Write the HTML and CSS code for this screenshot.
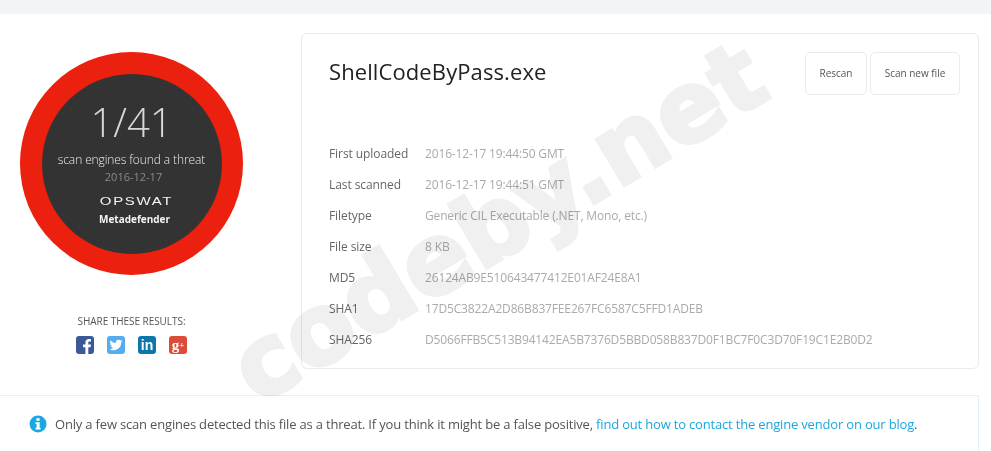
FILE: index.html
```html
<!DOCTYPE html>
<html lang="en">
<head>
    <meta charset="UTF-8">
    <meta name="viewport" content="width=device-width, initial-scale=1.0">
    <title>ShellCodeByPass.exe</title>
    <link rel="stylesheet" href="styles.css">
</head>
<body>
    <div class="topbar"></div>
    <div class="summary">
        <div class="side">
            <div class="ring">
                <div class="disc">
                    <div class="score">1/41</div>
                    <div class="found">scan engines found a threat</div>
                    <div class="date">2016-12-17</div>
                    <div class="opswat">OPSWAT</div>
                    <div class="product">Metadefender</div>
                </div>
            </div>
            <div class="share-title">SHARE THESE RESULTS:</div>
            <div class="share">
                <span class="social fb">
                    <svg viewBox="0 0 18 18" width="18" height="18"><path fill="#fff" d="M12.300 18v-6.800h2.300l.4-2.700h-2.700V6.900c0-.8.300-1.300 1.400-1.300H15V3.200c-.3 0-1.100-.1-2.100-.1-2.100 0-3.500 1.300-3.500 3.500v1.900H7v2.700h2.400V18z"/></svg>
                </span>
                <span class="social tw">
                    <svg viewBox="0 0 24 24" width="14" height="14"><path fill="#fff" d="M23 5c-.8.4-1.700.6-2.600.7.900-.6 1.600-1.400 2-2.500-.9.500-1.900.900-2.900 1.100a4.600 4.600 0 0 0-7.800 4.200C7.900 8.300 4.500 6.500 2.300 3.700a4.600 4.600 0 0 0 1.400 6.100c-.7 0-1.400-.2-2.100-.6 0 2.200 1.600 4.100 3.700 4.600-.7.200-1.400.2-2.100.1.600 1.800 2.300 3.100 4.300 3.200A9.300 9.300 0 0 1 .7 19a13 13 0 0 0 20-11.500c.9-.7 1.700-1.500 2.300-2.500z"/></svg>
                </span>
                <span class="social in">in</span>
                <span class="social gp">g<small>+</small></span>
            </div>
        </div>
        <div class="card">
            <div class="card-head">
                <h1>ShellCodeByPass.exe</h1>
                <div class="actions">
                    <a class="btn btn-rescan">Rescan</a>
                    <a class="btn btn-new">Scan new file</a>
                </div>
            </div>
            <dl class="details">
                <dt>First uploaded</dt><dd>2016-12-17 19:44:50 GMT</dd>
                <dt>Last scanned</dt><dd>2016-12-17 19:44:51 GMT</dd>
                <dt>Filetype</dt><dd>Generic CIL Executable (.NET, Mono, etc.)</dd>
                <dt>File size</dt><dd>8 KB</dd>
                <dt>MD5</dt><dd>26124AB9E510643477412E01AF24E8A1</dd>
                <dt>SHA1</dt><dd>17D5C3822A2D86B837FEE267FC6587C5FFD1ADEB</dd>
                <dt>SHA256</dt><dd>D5066FFB5C513B94142EA5B7376D5BBD058B837D0F1BC7F0C3D70F19C1E2B0D2</dd>
            </dl>
        </div>
    </div>
    <div class="notice">
        <svg class="info" viewBox="0 0 18 18" width="18" height="18"><circle cx="9" cy="9" r="8.500" fill="#1ba7e1"/><path fill="#fff" d="M7.400 3.300h3.200v2.500H7.400zM6.500 7.200h4.100v5.500h1v1.900H6.500v-1.900h1.100V9.100H6.500z"/></svg>
        <p>Only a few scan engines detected this file as a threat. If you think it might be a false positive, <a>find out how to contact the engine vendor on our blog</a>.</p>
    </div>
    <div class="watermark">codeby.net</div>
</body>
</html>
```

FILE: styles.css
```css
body {
    font-family: 'Open Sans', sans-serif;
    margin: 0;
    padding: 0;
    height: 451px;
    overflow: hidden;
    position: relative;
    background-color: #fff;
    color: #555;
}
.topbar {
    height: 14px;
    background-color: #f3f4f6;
}
.summary {
    display: flex;
    padding: 19px 12px 0 20px;
}
.side {
    width: 223px;
    margin-right: 58px;
    padding-top: 19px;
    text-align: center;
}
.ring {
    width: 223px;
    height: 223px;
    border-radius: 50%;
    background-color: #ec200e;
    display: flex;
    align-items: center;
    justify-content: center;
}
.disc {
    width: 180px;
    height: 180px;
    border-radius: 50%;
    background-color: #333;
    box-sizing: border-box;
    padding-top: 21px;
}
.score {
    font-size: 40px;
    font-weight: 300;
    line-height: 54px;
    color: #d8d8d8;
}
.found {
    font-size: 12px;
    font-weight: 300;
    line-height: 17px;
    margin-top: 2px;
    letter-spacing: -0.1px;
    color: #ececec;
}
.date {
    font-size: 11px;
    line-height: 15px;
    margin-top: 1px;
    padding-left: 4px;
    color: #8a8a8a;
}
.opswat {
    font-family: 'Liberation Sans', sans-serif;
    font-size: 10px;
    line-height: 12px;
    margin-top: 12px;
    padding-left: 6px;
    letter-spacing: 1.1px;
    transform: scaleX(1.5);
    color: #f4f4f4;
}
.product {
    font-size: 10px;
    font-weight: 700;
    line-height: 14px;
    margin-top: 4px;
    padding-left: 6px;
    color: #f4f4f4;
}
.share-title {
    margin-top: 39px;
    font-size: 10px;
    line-height: 14px;
    letter-spacing: -0.05px;
    color: #555;
}
.share {
    display: flex;
    justify-content: center;
    gap: 13px;
    margin-top: 8px;
}
.social {
    width: 18px;
    height: 18px;
    border-radius: 3px;
    color: #fff;
    display: flex;
    align-items: center;
    justify-content: center;
    overflow: hidden;
}
.fb {
    background-color: #3b5998;
}
.tw {
    background-color: #55acee;
}
.in {
    background-color: #0e76a8;
    font-family: 'Liberation Sans', sans-serif;
    font-weight: 700;
    font-size: 14px;
}
.gp {
    background-color: #dd4b39;
    font-family: 'Liberation Serif', serif;
    font-weight: 700;
    font-size: 15px;
    line-height: 14px;
}
.gp small {
    font-size: 9px;
}
.card {
    flex: 1;
    height: 336px;
    box-sizing: border-box;
    border: 1px solid #ebebeb;
    border-radius: 6px;
    padding: 18px 18px 0 27px;
}
.card-head {
    display: flex;
    justify-content: space-between;
    height: 86px;
}
h1 {
    margin: 3px 0 0;
    font-size: 22px;
    font-weight: 500;
    line-height: 32px;
    letter-spacing: 0.1px;
    color: #222;
}
.actions {
    display: flex;
    gap: 3px;
}
.btn {
    height: 43px;
    box-sizing: border-box;
    border: 1px solid #ebebeb;
    border-radius: 5px;
    font-size: 10px;
    font-weight: 500;
    line-height: 41px;
    text-align: center;
    color: #555;
}
.btn-rescan {
    width: 62px;
}
.btn-new {
    width: 90px;
}
.details {
    margin: 0;
    display: grid;
    grid-template-columns: 96px 1fr;
    grid-auto-rows: 31px;
    font-size: 12px;
    line-height: 31px;
}
dt {
    color: #666;
    letter-spacing: -0.08px;
}
dd {
    margin: 0;
    color: #aaa;
    white-space: nowrap;
    letter-spacing: -0.15px;
}
.notice {
    margin-top: 26px;
    width: 979px;
    height: 56px;
    box-sizing: border-box;
    border-top: 1px solid #dff3fc;
    border-right: 1px solid #dff3fc;
    display: flex;
    align-items: center;
    padding: 1px 0 0 29px;
    gap: 8px;
}
.notice p {
    margin: 0;
    font-size: 13px;
    letter-spacing: -0.18px;
    color: #555;
}
.notice a {
    color: #1ba7e1;
}
.info {
    flex: none;
}
.watermark {
    position: absolute;
    left: 498px;
    top: 222px;
    transform: translate(-50%, -50%) rotate(-31deg);
    font-family: 'DejaVu Sans', sans-serif;
    font-weight: 700;
    font-size: 97px;
    -webkit-text-stroke: 4px #f0f0f0;
    line-height: 1;
    white-space: nowrap;
    color: #f0f0f0;
    mix-blend-mode: multiply;
    pointer-events: none;
}
```
